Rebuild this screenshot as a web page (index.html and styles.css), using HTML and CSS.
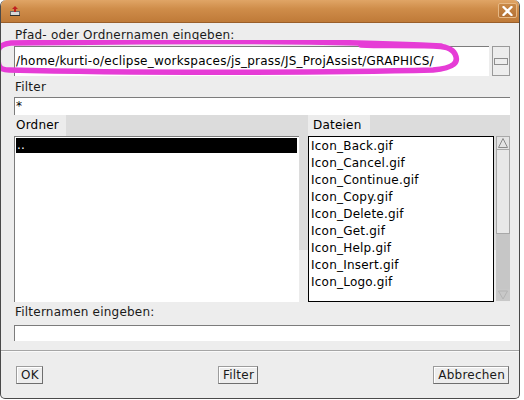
FILE: index.html
```html
<!DOCTYPE html>
<html>
<head>
<meta charset="utf-8">
<link rel="stylesheet" href="styles.css">
</head>
<body>
<div class="window">
  <div class="titlebar">
    <span class="ticon">
      <svg width="12" height="12" viewBox="0 0 12 12">
        <rect x="1" y="6" width="10" height="5" fill="#6a6a6a"/>
        <rect x="2" y="7" width="8" height="3" fill="#d8d8d8"/>
        <path d="M6 1 L9 4 L7 4 L7 7 L5 7 L5 4 L3 4 Z" fill="#c02020"/>
        <rect x="1" y="10" width="10" height="1" fill="#303030"/>
      </svg>
    </span>
    <span class="close">
      <svg width="11" height="10" viewBox="0 0 11 10">
        <path d="M1.5 1 L9.5 9 M9.5 1 L1.5 9" stroke="#fff" stroke-width="2.4" stroke-linecap="round"/>
      </svg>
    </span>
  </div>
  <div class="body">
    <div class="label first">Pfad- oder Ordnernamen eingeben:</div>
    <div class="pathrow">
      <div class="field path">/home/kurti-o/eclipse_workspaces/js_prass/JS_ProjAssist/GRAPHICS/</div>
      <div class="browse"><span class="bar"></span></div>
    </div>
    <div class="label">Filter</div>
    <div class="field filter">*</div>
    <div class="lists">
      <div class="col dirs">
        <div class="tab">Ordner</div>
        <div class="list dirlist"><div class="sel">..</div></div>
      </div>
      <div class="col files">
        <div class="tab">Dateien</div>
        <div class="filebox">
          <div class="list filelist">
            <div class="item">Icon_Back.gif</div>
            <div class="item">Icon_Cancel.gif</div>
            <div class="item">Icon_Continue.gif</div>
            <div class="item">Icon_Copy.gif</div>
            <div class="item">Icon_Delete.gif</div>
            <div class="item">Icon_Get.gif</div>
            <div class="item">Icon_Help.gif</div>
            <div class="item">Icon_Insert.gif</div>
            <div class="item">Icon_Logo.gif</div>
          </div>
          <div class="scrollbar">
            <div class="arrow up"><svg width="12" height="12" viewBox="0 0 12 12"><path d="M6 1.5 L10.5 10.5 L1.5 10.5 Z" fill="none" stroke="#8a8a8a"/></svg></div>
            <div class="thumb"></div>
            <div class="track"></div>
            <div class="arrow down"><svg width="12" height="10" viewBox="0 0 12 10"><path d="M1.5 1 L10.5 1 L6 9 Z" fill="none" stroke="#b4b4b4"/></svg></div>
          </div>
        </div>
      </div>
    </div>
    <div class="label third">Filternamen eingeben:</div>
    <div class="field fname"></div>
  </div>
  <div class="sep"></div>
  <div class="buttons">
    <button class="btn ok">OK</button>
    <button class="btn">Filter</button>
    <button class="btn">Abbrechen</button>
  </div>
  <svg class="scribble" width="470" height="44" viewBox="0 0 470 44">
    <path d="M440 6 C330 0, 150 1, 10 3 C-2 4, -4 10, -3 16 C-3 26, -2 30, 8 30 C120 33, 320 33, 432 30 C454 28, 458 22, 454 14 C451 8, 442 6, 432 6 C400 5, 380 6, 360 5" fill="none" stroke="#e63cd6" stroke-width="5.5" stroke-linecap="round" stroke-linejoin="round"/>
  </svg>
</div>
</body>
</html>
```
FILE: styles.css
```css
html, body {
  margin: 0;
  padding: 0;
  background: #ffffff;
}
body {
  width: 524px;
  height: 400px;
  overflow: hidden;
  font-family: "DejaVu Sans", "Noto Sans", sans-serif;
  font-size: 12px;
  letter-spacing: 0.22px;
  color: #000;
}
.window {
  position: relative;
  width: 520px;
  height: 399px;
  box-sizing: border-box;
  background: #ededed;
  border: 1px solid #4a4a4a;
  border-top: none;
  border-radius: 6px 6px 5px 5px;
  overflow: hidden;
}
.titlebar {
  height: 23px;
  background: linear-gradient(#e0a566, #cf8d4a 40%, #bf7a38);
  border-bottom: 1px solid #9a5f2a;
  box-sizing: border-box;
  display: flex;
  align-items: center;
  justify-content: space-between;
  padding: 0 2px 0 8px;
}
.ticon {
  display: flex;
  width: 12px;
  height: 12px;
}
.close {
  width: 19px;
  height: 15px;
  box-sizing: border-box;
  border: 1px solid #e6b884;
  border-radius: 2px;
  background: linear-gradient(#c98946, #b57236);
  display: flex;
  align-items: center;
  justify-content: center;
  margin-top: -1px;
}
.body {
  padding: 0 9px 0 13px;
  display: flex;
  flex-direction: column;
}
.label {
  height: 15px;
  line-height: 15px;
  padding-left: 1px;
  margin-top: 4px;
  color: #1a1a1a;
}
.label.first {
  margin-top: 5px;
}
.label.third {
  margin-top: 3px;
}
.field {
  background: #fff;
  border-top: 1px solid #7c7c7c;
  border-left: 1px solid #7c7c7c;
  box-sizing: border-box;
  line-height: 16px;
  padding-left: 1px;
  white-space: nowrap;
  overflow: hidden;
}
.pathrow {
  margin-top: 3px;
  height: 30px;
  display: flex;
  gap: 3px;
}
.path {
  flex: 1;
  line-height: 28px;
}
.browse {
  width: 18px;
  box-sizing: border-box;
  border: 1px solid #9a9a9a;
  display: flex;
  align-items: center;
  justify-content: center;
}
.browse .bar {
  width: 12px;
  height: 5px;
  border: 1px solid #8e8e8e;
}
.filter {
  margin-top: 2px;
  height: 18px;
}
.fname {
  margin-top: 5px;
  height: 16px;
}
.lists {
  height: 187px;
  display: flex;
  gap: 9px;
  background: linear-gradient(#dcdcdc 0, #dcdcdc 72%, #ececec 72%);
}
.col {
  display: flex;
  flex-direction: column;
}
.dirs {
  width: 286px;
}
.files {
  flex: 1;
}
.tab {
  height: 21px;
  line-height: 20px;
  background: #ececec;
  align-self: flex-start;
  padding: 0 7px 0 2px;
}
.files .tab {
  padding: 0 8px 0 5px;
}
.list {
  background: #fff;
  box-sizing: border-box;
}
.dirlist {
  flex: 1;
  border-top: 1px solid #7c7c7c;
  border-left: 1px solid #7c7c7c;
  padding: 1px 2px 0 1px;
}
.sel {
  background: #000;
  color: #fff;
  height: 15px;
  line-height: 15px;
  padding-left: 1px;
}
.filebox {
  flex: 1;
  display: flex;
  gap: 2px;
}
.filelist {
  width: 186px;
  border: 1px solid #000;
  padding: 1px 0 0 2px;
}
.item {
  height: 17px;
  line-height: 17px;
  white-space: nowrap;
}
.scrollbar {
  width: 14px;
  display: flex;
  flex-direction: column;
  margin-bottom: 1px;
}
.arrow {
  height: 14px;
  box-sizing: border-box;
  display: flex;
  align-items: center;
  justify-content: center;
  background: #e4e4e4;
}
.arrow.up {
  border: 1px solid #a8a8a8;
}
.arrow.down {
  height: 12px;
  background: #c8c8c8;
}
.thumb {
  height: 84px;
  box-sizing: border-box;
  background: #e8e8e8;
  border: 1px solid #a8a8a8;
  border-top: none;
}
.track {
  flex: 1;
  background: #c6c6c6;
}
.sep {
  margin-top: 9px;
  height: 1px;
  background: #a6a6a6;
  border-bottom: 1px solid #fafafa;
}
.buttons {
  display: flex;
  justify-content: space-between;
  padding: 14px 10px 0 15px;
}
.btn {
  font-family: "DejaVu Sans", "Noto Sans", sans-serif;
  font-size: 12px;
  letter-spacing: 0.22px;
  color: #1a1a1a;
  background: #ededed;
  border: 1px solid #9c9c9c;
  border-right-color: #6e6e6e;
  border-bottom-color: #6e6e6e;
  height: 18px;
  line-height: 15px;
  padding: 0 3px 0 4px;
  margin: 0;
  box-shadow: inset 1px 1px 0 #fff;
}
.scribble {
  position: absolute;
  left: 0;
  top: 40px;
  pointer-events: none;
}
```
